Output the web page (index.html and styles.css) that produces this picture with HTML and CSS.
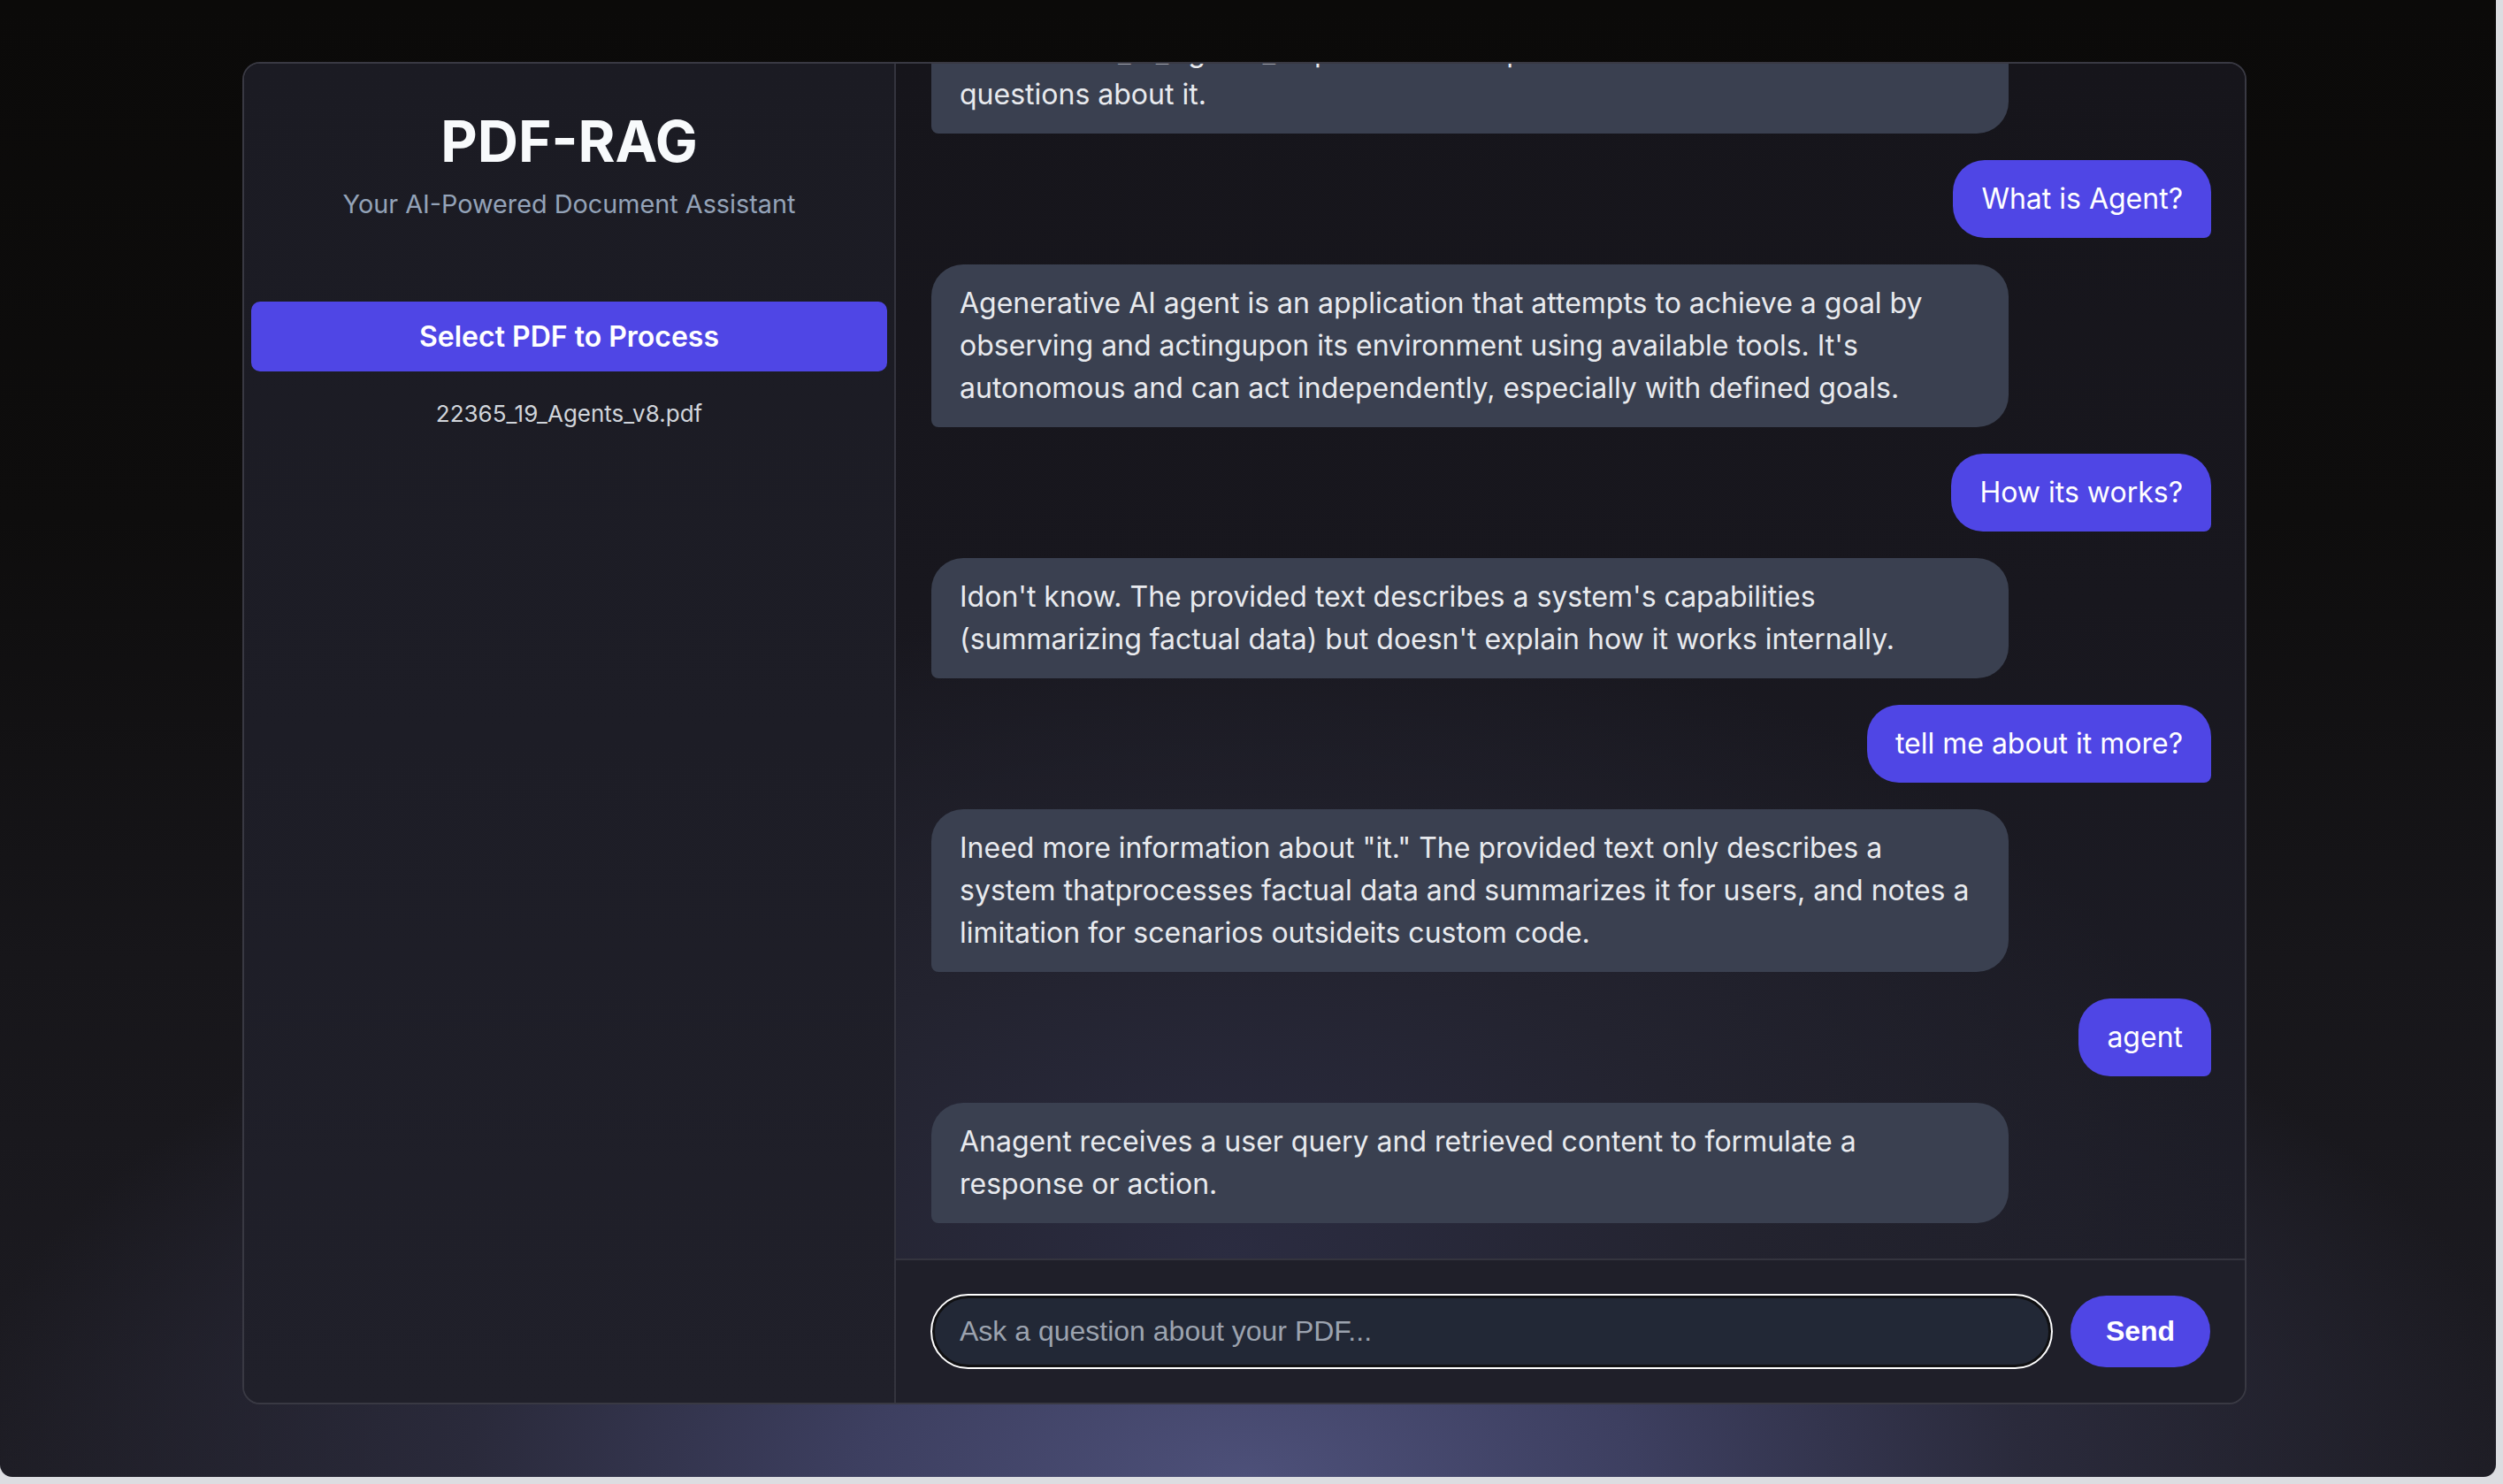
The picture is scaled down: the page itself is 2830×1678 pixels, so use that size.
FILE: index.html
```html
<!DOCTYPE html>
<html lang="en">
<head>
<meta charset="utf-8">
<title>PDF-RAG</title>
<link rel="stylesheet" href="styles.css">
</head>
<body>
<div class="screen">
  <main class="app">
    <aside class="sidebar">
      <h1 class="title">PDF-RAG</h1>
      <p class="subtitle">Your AI-Powered Document Assistant</p>
      <button class="select-btn" type="button">Select PDF to Process</button>
      <p class="filename">22365_19_Agents_v8.pdf</p>
    </aside>
    <section class="chat">
      <div class="messages">
        <div class="msg bot">Welcome! Your document has been uploaded.<br>PDF '22365_19_Agents_v8.pdf' has been processed. You can now ask questions about it.</div>
        <div class="msg user">What is Agent?</div>
        <div class="msg bot">Agenerative AI agent is an application that attempts to achieve a goal by observing and actingupon its environment using available tools. It's autonomous and can act independently, especially with defined goals.</div>
        <div class="msg user">How its works?</div>
        <div class="msg bot">Idon't know. The provided text describes a system's capabilities (summarizing factual data) but doesn't explain how it works internally.</div>
        <div class="msg user">tell me about it more?</div>
        <div class="msg bot">Ineed more information about "it." The provided text only describes a system thatprocesses factual data and summarizes it for users, and notes a limitation for scenarios outsideits custom code.</div>
        <div class="msg user">agent</div>
        <div class="msg bot">Anagent receives a user query and retrieved content to formulate a response or action.</div>
      </div>
      <form class="composer">
        <input class="ask" type="text" placeholder="Ask a question about your PDF..." autofocus>
        <button class="send" type="button">Send</button>
      </form>
    </section>
  </main>
</div>
</body>
</html>
```

FILE: styles.css
```css
* { box-sizing: border-box; }

html, body {
  margin: 0;
  padding: 0;
}

body {
  width: 2830px;
  height: 1678px;
  background: #dcdde1;
  font-family: Inter, "Noto Sans", sans-serif;
  overflow: hidden;
}

.screen {
  width: 2822px;
  height: 1670px;
  padding: 70px 0 0 274px;
  border-radius: 0 0 14px 14px;
  background:
    radial-gradient(ellipse 52% 42% at 50% 100%, #4d5079 0%, #3d3f60 30%, #2a2a3b 60%, rgba(30, 30, 38, 0) 100%),
    linear-gradient(to bottom, #0b0a09 0%, #0e0d0d 35%, #17161a 65%, #1d1c23 100%);
}

.app {
  width: 2266px;
  height: 1518px;
  display: grid;
  grid-template-columns: 737px 1fr;
  border: 2px solid #393943;
  border-radius: 20px;
  overflow: hidden;
}

/* Sidebar */
.sidebar {
  display: flex;
  flex-direction: column;
  align-items: stretch;
  padding: 48px 8px 0 8px;
  border-right: 2px solid #34343e;
  background: linear-gradient(to bottom, #1b1b23 0%, #1d1d26 50%, #20202a 100%);
  text-align: center;
}

.title {
  margin: 0;
  font-size: 64px;
  line-height: 80px;
  font-weight: 700;
  color: #f8fafc;
}

.subtitle {
  margin: 11px 0 0;
  font-size: 28.8px;
  line-height: 40px;
  color: #94a3b8;
}

.select-btn {
  margin-top: 90px;
  height: 79px;
  border: none;
  border-radius: 10px;
  background: #4f46e5;
  color: #ffffff;
  font-family: Inter, "Noto Sans", sans-serif;
  font-size: 32px;
  font-weight: 600;
}

.filename {
  margin: 30px 0 0;
  font-size: 26px;
  line-height: 36px;
  color: #d1d5db;
}

/* Chat */
.chat {
  display: flex;
  flex-direction: column;
  min-height: 0;
}

.messages {
  flex: 1;
  min-height: 0;
  display: flex;
  flex-direction: column;
  justify-content: flex-end;
  gap: 30px;
  padding: 0 38px 40px 40px;
  overflow: hidden;
  background:
    radial-gradient(ellipse 75% 55% at 25% 100%, #2b2c41 0%, #23232f 50%, rgba(23, 22, 28, 0) 100%),
    linear-gradient(to bottom, #16151b 0%, #18171e 45%, #1e1e28 100%);
}

.msg {
  flex-shrink: 0;
  max-width: 1218px;
  padding: 20px 32px;
  font-size: 32px;
  line-height: 48px;
}

.msg.bot {
  align-self: flex-start;
  background: #3a4050;
  color: #e8eaee;
  border-radius: 36px 36px 36px 8px;
}

.msg.user {
  align-self: flex-end;
  background: #4f46e5;
  color: #ffffff;
  border-radius: 36px 36px 8px 36px;
}

.composer {
  display: flex;
  align-items: center;
  gap: 22px;
  margin: 0;
  padding: 40px 39px 40px 41px;
  border-top: 2px solid #34343e;
  background: #1f1f29;
}

.ask {
  flex: 1;
  height: 81px;
  padding: 0 28px;
  border: 3px solid #101012;
  border-radius: 41px;
  outline: 2px solid #ffffff;
  background: #222836;
  color: #e5e7eb;
  caret-color: #e5e7eb;
  font-family: "Liberation Sans", Arial, sans-serif;
  font-size: 32px;
}

.ask::placeholder {
  color: #9ca3af;
}

.send {
  width: 158px;
  height: 81px;
  border: none;
  border-radius: 41px;
  background: #4f46e5;
  color: #ffffff;
  font-family: "Liberation Sans", Arial, sans-serif;
  font-size: 32px;
  font-weight: 700;
}
```
